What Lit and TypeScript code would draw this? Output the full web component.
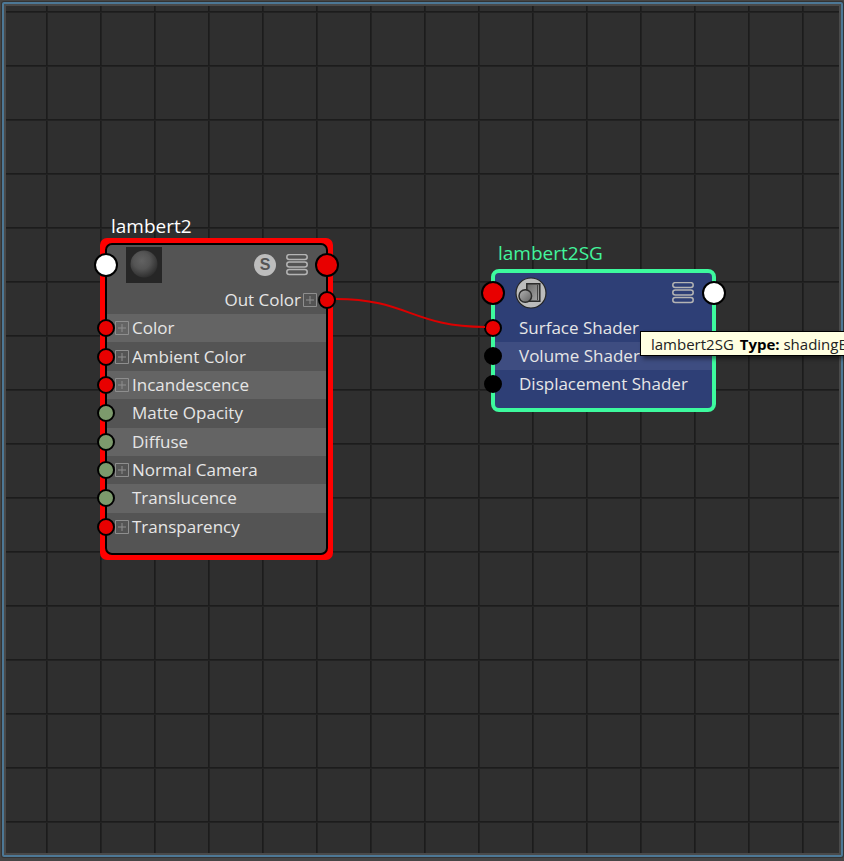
import { LitElement, html, css, svg, nothing } from "lit";
import { customElement, property } from "lit/decorators.js";
import { styleMap } from "lit/directives/style-map.js";

type Tone = "red" | "green" | "white" | "black";

interface Attr {
  name: string;
  tone: Tone;
  expands?: boolean;
}

const MATERIAL_INPUTS: Attr[] = [
  { name: "Color", tone: "red", expands: true },
  { name: "Ambient Color", tone: "red", expands: true },
  { name: "Incandescence", tone: "red", expands: true },
  { name: "Matte Opacity", tone: "green" },
  { name: "Diffuse", tone: "green" },
  { name: "Normal Camera", tone: "green", expands: true },
  { name: "Translucence", tone: "green" },
  { name: "Transparency", tone: "red", expands: true },
];

const GROUP_INPUTS: Attr[] = [
  { name: "Surface Shader", tone: "red" },
  { name: "Volume Shader", tone: "black" },
  { name: "Displacement Shader", tone: "black" },
];

const modeIcon = svg`<svg class="mode-icon" viewBox="0 0 22 22" width="22" height="22" aria-hidden="true">
  <g fill="none" stroke="#b4b4b4" stroke-width="1.5">
    <rect x=".8" y=".6" width="20.4" height="5" rx="2.5" />
    <rect x=".8" y="8" width="20.4" height="5" rx="2.5" />
    <rect x=".8" y="15.6" width="20.4" height="5" rx="2.5" />
  </g>
</svg>`;

const sharedStyles = css`
  :host {
    display: block;
    font-family: "Open Sans", "Noto Sans", sans-serif;
    font-size: 17px;
    line-height: 28px;
    color: #e6e6e6;
    white-space: nowrap;
  }
  button {
    display: block;
    margin: 0;
    padding: 0;
    border: 0;
    background: none;
    font: inherit;
    color: inherit;
  }
  svg {
    display: block;
  }
  .title {
    margin: 0;
    font-size: 19px;
    font-weight: 400;
    line-height: 24px;
  }
  .head {
    display: flex;
    align-items: center;
    position: relative;
  }
  .spacer {
    flex: 1;
  }
  .row {
    position: relative;
    display: flex;
    align-items: center;
  }
`;

@customElement("node-port")
export class NodePort extends LitElement {
  @property() tone: Tone = "red";
  @property({ reflect: true }) side: "in" | "out" = "in";
  @property({ type: Boolean, reflect: true }) large = false;

  static styles = css`
    :host {
      position: absolute;
      top: 50%;
      left: 0;
      transform: translate(-50%, -50%);
    }
    :host([side="out"]) {
      left: 100%;
    }
    .dot {
      box-sizing: border-box;
      width: 18px;
      height: 18px;
      border: 2px solid #000;
      border-radius: 50%;
    }
    :host([large]) .dot {
      width: 24px;
      height: 24px;
    }
    .red {
      background: #e80000;
    }
    .green {
      background: #7c9a6c;
    }
    .white {
      background: #fff;
    }
    .black {
      background: #000;
    }
  `;

  render() {
    return html`<div class="dot ${this.tone}"></div>`;
  }
}

const expander = (name: string) => html`
  <button class="expander" aria-label="Expand ${name}">
    <svg viewBox="0 0 14 14" width="14" height="14" aria-hidden="true">
      <path d="M.5 .5h13v13h-13zM7 3v8M3 7h8" fill="none" stroke="#8e8e8e" />
    </svg>
  </button>
`;

@customElement("material-node")
export class MaterialNode extends LitElement {
  @property() name = "";

  static styles = [
    sharedStyles,
    css`
      .title {
        padding-left: 11px;
        color: #fff;
      }
      .frame {
        border: 5px solid #f00;
        border-radius: 7px;
        background: #f00;
      }
      .body {
        border: 2px solid #000;
        border-radius: 7px;
        background: #545454;
        padding-bottom: 12px;
      }
      .head {
        height: 40px;
        padding: 0 18px 0 19px;
        gap: 10px;
      }
      .badge {
        width: 22px;
        height: 22px;
        border-radius: 50%;
        background: #bdbdbd;
        color: #555;
        font: 700 16px/22px "Liberation Sans", sans-serif;
        text-align: center;
      }
      .output {
        height: 29px;
        justify-content: flex-end;
        padding-right: 9px;
        gap: 2px;
      }
      .inputs {
        display: grid;
        grid-auto-rows: 1fr;
        height: 227px;
      }
      .input:nth-child(odd) {
        background: #646464;
      }
      .input .expander {
        margin-left: 8px;
      }
      .label {
        margin-left: 3px;
      }
      .plain {
        margin-left: 25px;
      }
      node-port {
        margin-left: -1px;
      }
      node-port[side="out"] {
        margin-left: 1px;
      }
    `,
  ];

  render() {
    return html`
      <h2 class="title">${this.name}</h2>
      <div class="frame">
        <div class="body">
          <div class="head">
            <svg viewBox="0 0 36 36" width="36" height="36" aria-hidden="true">
              <defs>
                <radialGradient id="ball" cx="42%" cy="38%" r="62%">
                  <stop offset="0" stop-color="#626262" />
                  <stop offset=".5" stop-color="#545454" />
                  <stop offset="1" stop-color="#303030" />
                </radialGradient>
              </defs>
              <rect width="36" height="36" fill="#262626" />
              <circle cx="18" cy="17" r="13.5" fill="url(#ball)" />
            </svg>
            <div class="spacer"></div>
            <button class="badge" aria-label="Solo">S</button>
            <button aria-label="View mode">${modeIcon}</button>
            <node-port tone="white" large></node-port>
            <node-port tone="red" side="out" large></node-port>
          </div>
          <div class="row output">
            <span>Out Color</span>
            ${expander("Out Color")}
            <node-port tone="red" side="out"></node-port>
          </div>
          <div class="inputs">
            ${MATERIAL_INPUTS.map(
              (a) => html`
                <div class="row input">
                  ${a.expands ? expander(a.name) : nothing}
                  <span class=${a.expands ? "label" : "plain"}>${a.name}</span>
                  <node-port tone=${a.tone}></node-port>
                </div>
              `
            )}
          </div>
        </div>
      </div>
    `;
  }
}

@customElement("group-node")
export class GroupNode extends LitElement {
  @property() name = "";

  static styles = [
    sharedStyles,
    css`
      .title {
        padding-left: 7px;
        color: #42f59c;
      }
      .body {
        margin-top: 4px;
        border: 4px solid #3dfa9e;
        border-radius: 8px;
        background: #2e3f76;
        padding-bottom: 10px;
      }
      .head {
        height: 40px;
        margin-bottom: 1px;
        padding: 0 18px 0 20px;
      }
      .row {
        height: 28px;
        padding-left: 24px;
      }
      .row:nth-child(odd) {
        background: #3e4d81;
      }
      node-port {
        margin-left: -2px;
      }
      node-port[side="out"] {
        margin-left: 2px;
      }
    `,
  ];

  render() {
    return html`
      <h2 class="title">${this.name}</h2>
      <div class="body">
        <div class="head">
          <svg viewBox="0 0 32 32" width="32" height="32" aria-hidden="true">
            <defs>
              <linearGradient id="metal" x1="0" y1="0" x2="1" y2="1">
                <stop offset="0" stop-color="#b4b4b4" />
                <stop offset="1" stop-color="#606060" />
              </linearGradient>
              <linearGradient id="plate" x1="0" y1="0" x2="1" y2="1">
                <stop offset="0" stop-color="#6a6a6a" />
                <stop offset="1" stop-color="#a8a8a8" />
              </linearGradient>
            </defs>
            <circle cx="16" cy="16" r="15" fill="#bcbcbc" stroke="#262626" stroke-width="1.2" />
            <path d="M11.8 6.7h13v17.6h-13z" fill="url(#plate)" stroke="#2b2b2b" stroke-width="1.5" />
            <path d="M22.5 8v15" stroke="#444" stroke-width="1" />
            <circle cx="10.3" cy="19" r="6.3" fill="url(#metal)" stroke="#2b2b2b" stroke-width="1.5" />
          </svg>
          <div class="spacer"></div>
          <button aria-label="View mode">${modeIcon}</button>
          <node-port tone="red" large></node-port>
          <node-port tone="white" side="out" large></node-port>
        </div>
        ${GROUP_INPUTS.map(
          (a) => html`
            <div class="row">
              <span>${a.name}</span>
              <node-port tone=${a.tone}></node-port>
            </div>
          `
        )}
      </div>
    `;
  }
}

@customElement("app-root")
export class AppRoot extends LitElement {
  static styles = css`
    :host {
      display: block;
      box-sizing: border-box;
      position: relative;
      height: 100vh;
      overflow: hidden;
      background: #454545;
      padding: 2px 1px 4px 2px;
      font-family: "Open Sans", "Noto Sans", sans-serif;
    }
    .panel {
      box-sizing: border-box;
      height: 100%;
      border: 2px solid #4d7896;
      border-radius: 2px;
      padding: 2px;
      background: #4a4a4a;
      box-shadow: 0 0 0 1px #333;
    }
    .canvas {
      height: 100%;
      background-color: #2f2f2f;
      background-image: linear-gradient(#1c1c1c 1px, #222 1px, #222 2px, transparent 2px),
        linear-gradient(90deg, #1c1c1c 1px, #222 1px, #222 2px, transparent 2px);
      background-size: 54px 54px;
      background-position: 40px 5px;
    }
    .wires,
    .placed {
      position: absolute;
    }
    .wires {
      left: 0;
      top: 0;
      width: 100%;
      height: 100%;
    }
    .tooltip {
      box-sizing: border-box;
      height: 25px;
      padding: 0 10px;
      border: 1px solid #000;
      background: #ffffe1;
      color: #222;
      font-size: 15px;
      line-height: 24px;
      white-space: nowrap;
      box-shadow: 3px 3px 4px rgba(0, 0, 0, 0.45);
    }
    .tooltip b {
      margin-left: 2px;
      color: #000;
    }
  `;

  private at(left: number, top: number, width?: number) {
    return styleMap({
      left: `${left}px`,
      top: `${top}px`,
      ...(width ? { width: `${width}px` } : {}),
    });
  }

  render() {
    return html`
      <div class="panel"><div class="canvas"></div></div>
      <material-node class="placed" name="lambert2" style=${this.at(100, 214, 233)}></material-node>
      <group-node class="placed" name="lambert2SG" style=${this.at(491, 241, 225)}></group-node>
      <svg class="wires" aria-hidden="true">
        <path d="M336 299C407 299 413 327 485 327" fill="none" stroke="#dc0000" stroke-width="2" />
      </svg>
      <div class="placed tooltip" role="tooltip" style=${this.at(640, 331)}>
        lambert2SG <b>Type:</b> shadingEngine
      </div>
    `;
  }
}
